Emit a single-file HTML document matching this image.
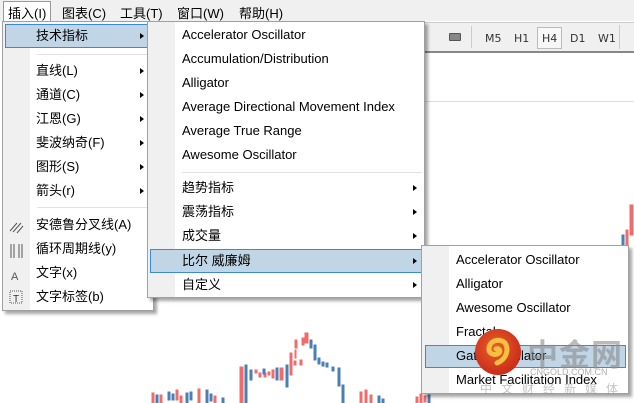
<!DOCTYPE html>
<html><head><meta charset="utf-8"><style>
*{margin:0;padding:0;box-sizing:border-box}
body{width:634px;height:403px;overflow:hidden;background:#fff;font-family:"Liberation Sans","Noto Sans CJK SC",sans-serif;font-size:13px;color:#000;position:relative}
.abs{position:absolute}
.menubar{left:0;top:0;width:634px;height:21px;background:#f0f0f0}
.mb{position:absolute;top:3px;font-size:13px}
.menu{position:absolute;background:#fff;border:1px solid #a0a0a0;box-shadow:3px 3px 3px rgba(0,0,0,.35)}
.gut{position:absolute;left:0;top:0;bottom:0;background:#f0f0f0}
.it{position:absolute;left:0;right:0;height:22px;line-height:22px}
.hl{position:absolute;background:#c0d5e6;border:1px solid #3a8ad6}
.arr{position:absolute;width:0;height:0;border-left:4px solid #000;border-top:3px solid transparent;border-bottom:3px solid transparent}
.sep{position:absolute;height:1px;background:#e2e2e2}
.tb{position:absolute;font-size:11px;color:#333;font-family:"DejaVu Sans",sans-serif}
</style></head><body>
<div class="abs menubar"></div>
<div class="abs" style="left:3px;top:1px;width:48px;height:21px;border:1px solid #999;border-bottom:none;background:#fff"></div>
<span class="mb" style="left:8px">插入(I)</span>
<span class="mb" style="left:62px">图表(C)</span>
<span class="mb" style="left:120px">工具(T)</span>
<span class="mb" style="left:177px">窗口(W)</span>
<span class="mb" style="left:239px">帮助(H)</span>

<div class="abs" style="left:420px;top:22px;width:214px;height:30px;background:#f0f0f0;border-top:1px solid #ccc"></div>
<div class="abs" style="left:420px;top:51px;width:214px;height:2px;background:#888"></div>
<div class="abs" style="left:449px;top:33px;width:12px;height:8px;background:#888;border:1px solid #555;border-radius:1px"></div>
<div class="abs" style="left:471px;top:26px;width:1px;height:22px;background:#ccc"></div>
<div class="abs" style="left:537px;top:27px;width:25px;height:22px;border:1px solid #bbb;background:#f8f8f8"></div>
<span class="tb" style="left:485px;top:32px">M5</span>
<span class="tb" style="left:514px;top:32px">H1</span>
<span class="tb" style="left:542px;top:32px">H4</span>
<span class="tb" style="left:570px;top:32px">D1</span>
<span class="tb" style="left:598px;top:32px">W1</span>
<div class="abs" style="left:619px;top:25px;width:1px;height:24px;background:#ccc"></div>
<div class="abs" style="left:420px;top:101px;width:214px;height:1px;background:#ddd"></div>

<svg class="abs" style="left:0;top:0" width="634" height="403">
<g stroke-width="1">
<g fill="#f26b6b" stroke="#f26b6b">
<rect x="152" y="393" width="2" height="10"/><rect x="160" y="395" width="2" height="8"/><rect x="176" y="390" width="2" height="10"/><rect x="180" y="396" width="2" height="7"/><rect x="198" y="389" width="2" height="14"/><rect x="214" y="396" width="2" height="7"/>
<rect x="240" y="367" width="3" height="36"/><rect x="259" y="373" width="2" height="4"/><rect x="264" y="373" width="2" height="4"/><rect x="268" y="372" width="2" height="3"/><rect x="272" y="370" width="2" height="8"/><rect x="280" y="368" width="3" height="12"/><rect x="290" y="362" width="2" height="3"/><rect x="294" y="361" width="2" height="4"/><rect x="300" y="360" width="2" height="5"/><rect x="295" y="350" width="1" height="8"/>
<rect x="295" y="340" width="2" height="8"/><rect x="302" y="338" width="2" height="7"/><rect x="305" y="333" width="3" height="10"/>
<rect x="360" y="392" width="2" height="11"/><rect x="365" y="390" width="2" height="13"/><rect x="370" y="395" width="2" height="8"/>
<rect x="416" y="397" width="2" height="6"/><rect x="420" y="394" width="2" height="9"/><rect x="424" y="396" width="2" height="6"/>
<rect x="290" y="353" width="2" height="22"/><rect x="255" y="370" width="2" height="3"/>
<rect x="630" y="205" width="3" height="30"/><rect x="626" y="230" width="2" height="15"/>
</g>
<g fill="#4a7fb5" stroke="#4a7fb5">
<rect x="156" y="395" width="2" height="8"/><rect x="168" y="392" width="2" height="8"/><rect x="172" y="394" width="2" height="6"/><rect x="186" y="393" width="2" height="10"/><rect x="190" y="392" width="2" height="8"/><rect x="206" y="390" width="2" height="13"/><rect x="210" y="394" width="2" height="7"/><rect x="222" y="398" width="2" height="5"/>
<rect x="245" y="365" width="2" height="38"/><rect x="250" y="370" width="2" height="10"/><rect x="263" y="369" width="2" height="5"/><rect x="276" y="368" width="2" height="12"/><rect x="286" y="365" width="2" height="22"/>
<rect x="310" y="340" width="2" height="8"/><rect x="314" y="345" width="2" height="15"/><rect x="318" y="358" width="2" height="6"/><rect x="322" y="362" width="2" height="4"/><rect x="326" y="363" width="2" height="4"/><rect x="332" y="367" width="2" height="4"/><rect x="338" y="368" width="2" height="18"/><rect x="342" y="385" width="2" height="18"/>
<rect x="378" y="396" width="2" height="7"/><rect x="382" y="399" width="2" height="4"/><rect x="428" y="395" width="2" height="8"/>
<rect x="622" y="235" width="2" height="12"/>
</g>
</g>
</svg>

<div class="menu" style="left:2px;top:21px;width:152px;height:290px">
<div class="gut" style="width:27px"></div>
<div class="hl" style="left:2px;top:2px;width:143px;height:24px"></div>
<div class="it" style="top:3px;padding-left:33px">技术指标</div><div class="arr" style="left:137px;top:11px"></div>
<div class="sep" style="left:34px;right:2px;top:32px"></div>
<div class="it" style="top:38px;padding-left:33px">直线(L)</div><div class="arr" style="left:137px;top:46px"></div>
<div class="it" style="top:62px;padding-left:33px">通道(C)</div><div class="arr" style="left:137px;top:70px"></div>
<div class="it" style="top:86px;padding-left:33px">江恩(G)</div><div class="arr" style="left:137px;top:94px"></div>
<div class="it" style="top:110px;padding-left:33px">斐波纳奇(F)</div><div class="arr" style="left:137px;top:118px"></div>
<div class="it" style="top:134px;padding-left:33px">图形(S)</div><div class="arr" style="left:137px;top:142px"></div>
<div class="it" style="top:158px;padding-left:33px">箭头(r)</div><div class="arr" style="left:137px;top:166px"></div>
<div class="sep" style="left:34px;right:2px;top:185px"></div>
<div class="it" style="top:192px;padding-left:33px">安德鲁分叉线(A)</div>
<div class="it" style="top:216px;padding-left:33px">循环周期线(y)</div>
<div class="it" style="top:240px;padding-left:33px">文字(x)</div>
<div class="it" style="top:264px;padding-left:33px">文字标签(b)</div>
<svg class="abs" style="left:6px;top:196px" width="16" height="90" stroke="#555" fill="none">
<path d="M1 13L8 5M4 14L12 5M8 15L14 8"/>
<path d="M2 26V40M5 26V40M10 26V40M13 26V40"/>
<text x="2" y="62" font-size="11" fill="#555" stroke="none" font-family="Liberation Sans">A</text>
<rect x="1" y="73" width="12" height="12" stroke-dasharray="1 1"/>
<text x="4" y="84" font-size="10" fill="#333" stroke="none" font-family="Liberation Sans">T</text>
</svg>
</div>

<div class="menu" style="left:147px;top:21px;width:278px;height:277px">
<div class="gut" style="width:27px"></div>
<div class="it" style="top:2px;padding-left:34px">Accelerator Oscillator</div>
<div class="it" style="top:26px;padding-left:34px">Accumulation/Distribution</div>
<div class="it" style="top:50px;padding-left:34px">Alligator</div>
<div class="it" style="top:74px;padding-left:34px">Average Directional Movement Index</div>
<div class="it" style="top:98px;padding-left:34px">Average True Range</div>
<div class="it" style="top:122px;padding-left:34px">Awesome Oscillator</div>
<div class="sep" style="left:34px;right:2px;top:150px"></div>
<div class="it" style="top:155px;padding-left:34px">趋势指标</div><div class="arr" style="left:265px;top:163px"></div>
<div class="it" style="top:179px;padding-left:34px">震荡指标</div><div class="arr" style="left:265px;top:187px"></div>
<div class="it" style="top:203px;padding-left:34px">成交量</div><div class="arr" style="left:265px;top:211px"></div>
<div class="hl" style="left:2px;top:227px;width:273px;height:24px"></div>
<div class="it" style="top:228px;padding-left:34px">比尔 威廉姆</div><div class="arr" style="left:265px;top:236px"></div>
<div class="it" style="top:252px;padding-left:34px">自定义</div><div class="arr" style="left:265px;top:260px"></div>
</div>

<div class="menu" style="left:421px;top:245px;width:208px;height:149px">
<div class="gut" style="width:27px"></div>
<div class="it" style="top:3px;padding-left:34px">Accelerator Oscillator</div>
<div class="it" style="top:27px;padding-left:34px">Alligator</div>
<div class="it" style="top:51px;padding-left:34px">Awesome Oscillator</div>
<div class="it" style="top:75px;padding-left:34px">Fractals</div>
<div class="hl" style="left:3px;top:99px;width:201px;height:23px"></div>
<div class="it" style="top:99px;padding-left:34px">Gator Oscillator</div>
<div class="it" style="top:123px;padding-left:34px">Market Facilitation Index</div>
</div>

<div class="abs" style="left:475px;top:329px;width:46px;height:46px;border-radius:50%;background:radial-gradient(circle at 45% 40%,#e9612a,#c92a18 75%)"></div>
<svg class="abs" style="left:475px;top:329px" width="46" height="46"><path d="M30 14c-5-5-15-3-16 5c-1 6 6 8 10 5c2-2 0-5-3-4M30 14c4 6 2 16-8 20" stroke="#f8c040" stroke-width="5" fill="none" stroke-linecap="round"/></svg>
<div class="abs" style="left:527px;top:330px;font-size:31px;font-weight:bold;color:rgba(140,140,140,.6);font-family:'Noto Sans CJK SC',sans-serif;letter-spacing:1px">中金网</div>
<div class="abs" style="left:530px;top:367px;font-size:9px;color:rgba(140,140,140,.7)">CNGOLD.COM.CN</div>
<div class="abs" style="left:480px;top:380px;font-size:12px;color:rgba(140,140,140,.5);letter-spacing:9px">中文财经新媒体</div>
</body></html>
